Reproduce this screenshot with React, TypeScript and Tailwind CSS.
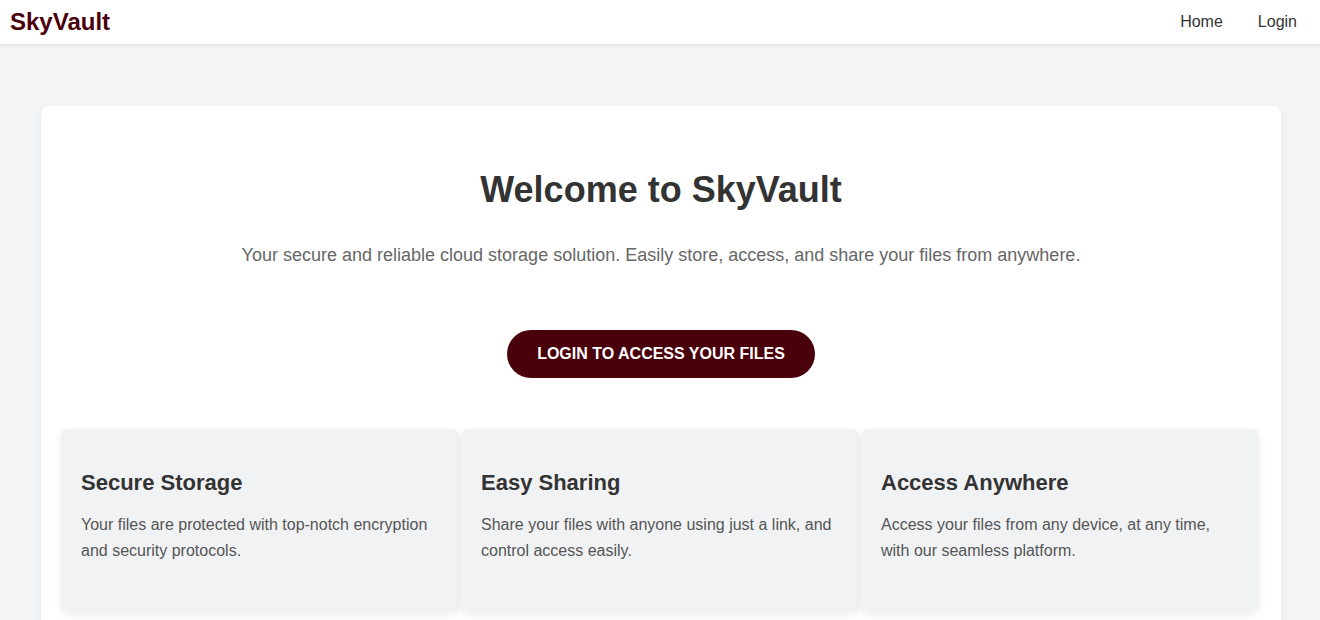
const features = [
  {
    title: "Secure Storage",
    text: "Your files are protected with top-notch encryption and security protocols.",
  },
  {
    title: "Easy Sharing",
    text: "Share your files with anyone using just a link, and control access easily.",
  },
  {
    title: "Access Anywhere",
    text: "Access your files from any device, at any time, with our seamless platform.",
  },
];

export default function App() {
  return (
    <div className="min-h-screen bg-[#f4f5f7] font-['Liberation_Sans',Arial,sans-serif] text-[#333]">
      {/* Navbar */}
      <header className="h-[44px] bg-white shadow-[0_2px_4px_rgba(0,0,0,0.08)] flex items-center justify-between pl-[10px] pr-[23px] relative z-10">
        <a href="#" className="text-[24px] font-bold text-[#4a000a] leading-none">
          SkyVault
        </a>
        <nav className="flex items-center gap-[35px] text-[16px] text-[#333] -mt-[1px]">
          <a href="#">Home</a>
          <a href="#">Login</a>
        </nav>
      </header>

      {/* Main */}
      <main className="pl-[41px] pr-[39px] pt-[62px]">
        <div className="bg-white rounded-[8px] shadow-[0_2px_10px_rgba(0,0,0,0.06)] px-[20px] pt-[62px] pb-[20px]">
          <h1 className="text-center text-[36px] font-bold leading-[43px] text-[#333]">
            Welcome to SkyVault
          </h1>
          <p className="text-center text-[18px] leading-[27px] text-[#666] mt-[31px]">
            Your secure and reliable cloud storage solution. Easily store, access, and share your files from anywhere.
          </p>
          <div className="flex justify-center mt-[61px]">
            <button className="h-[48px] px-[30px] rounded-full bg-[#4a000a] text-white text-[16px] font-bold uppercase">
              Login to Access Your Files
            </button>
          </div>

          {/* Features */}
          <div className="grid grid-cols-[398px_398px_398px] gap-[2px] mt-[51px]">
            {features.map((f) => (
              <div
                key={f.title}
                className="bg-[#f1f2f4] rounded-[8px] shadow-[0_2px_8px_rgba(0,0,0,0.08)] px-[20px] pt-[41px] h-[183px]"
              >
                <h3 className="text-[22px] font-bold leading-[26px] text-[#333]">{f.title}</h3>
                <p className="mt-[16px] text-[16px] leading-[26px] text-[#555]">{f.text}</p>
              </div>
            ))}
          </div>
        </div>
      </main>
    </div>
  );
}
